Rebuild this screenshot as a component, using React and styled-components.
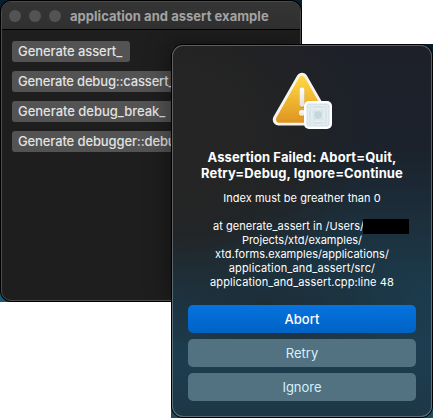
import React from "react";
import styled, { createGlobalStyle } from "styled-components";

const GlobalStyle = createGlobalStyle`
  * { box-sizing: border-box; }
  body { margin: 0; background: #fff; font-family: Inter, "Liberation Sans", sans-serif; -webkit-font-smoothing: antialiased; }
`;

const Desktop = styled.main`
  position: relative;
  width: 433px;
  height: 418px;
  overflow: hidden;
`;

const WindowBackdrop = styled.div`
  width: 302px;
  height: 302px;
  padding: 1px;
  background: linear-gradient(180deg, #06202f 0%, #071a26 60%, #1d5873 98%);
`;

const Window = styled.section`
  position: relative;
  display: flex;
  flex-direction: column;
  width: 300px;
  height: 300px;
  overflow: hidden;
  border: 1px solid #4b4b4b;
  border-radius: 10px;
  background: #1e1e1e;
  box-shadow: 0 0 0 1px #000;

  /* shade that the dialog casts on the window */
  &::after {
    content: "";
    position: absolute;
    left: 169px;
    top: 44px;
    right: 0;
    bottom: 0;
    box-shadow: 0 0 22px 2px rgba(0, 0, 0, 0.4);
  }
`;

const TitleBar = styled.header`
  display: flex;
  flex: none;
  align-items: center;
  height: 28px;
  padding-left: 7px;
  background: linear-gradient(#353535, #303030);
  border-bottom: 1px solid #000;
`;

const TrafficLights = styled.div`
  display: flex;
  gap: 8px;
  margin-right: 9px;
`;

const Light = styled.span`
  width: 12px;
  height: 12px;
  border-radius: 50%;
  background: #535353;
`;

const Title = styled.h1`
  margin: 0;
  font-size: 13px;
  line-height: 16px;
  font-weight: 700;
  letter-spacing: 0.03px;
  white-space: nowrap;
  color: #a3a3a3;
`;

const WindowBody = styled.div`
  display: flex;
  flex-direction: column;
  align-items: flex-start;
  gap: 9px;
  padding: 11px 0 0 10px;
`;

const PushButton = styled.button`
  width: ${(p) => p.$width}px;
  height: 21px;
  padding: 0 0 1px 6px;
  border: 0;
  border-radius: 3px;
  background: #535353;
  color: #e2e2e2;
  font: 500 13px/19px Inter, "Liberation Sans", sans-serif;
  letter-spacing: ${(p) => p.$spacing}px;
  text-align: left;
  white-space: nowrap;
`;

const DialogBackdrop = styled.div`
  position: absolute;
  left: 171px;
  top: 44px;
  width: 262px;
  height: 374px;
  padding: 1px 0 1px 1px;
  overflow: hidden;
  background: linear-gradient(90deg, transparent 0 240px, #071c29 240px) top / 100% 20px no-repeat,
    linear-gradient(#1b4a60, #1b4a60) bottom / 100% 20px no-repeat;
`;

const Dialog = styled.section`
  display: flex;
  flex-direction: column;
  align-items: center;
  width: 260px;
  height: 372px;
  padding: 24px 15px 15px;
  border: 1px solid rgba(255, 255, 255, 0.27);
  border-radius: 11px;
  color: #fff;
  text-align: center;
  background:
    radial-gradient(ellipse 200px 175px at 0% 24%, #252525 0 30%, rgba(35, 35, 35, 0.85) 58%, transparent 100%),
    radial-gradient(ellipse 170px 60px at 36% 70%, rgba(29, 37, 41, 0.65), transparent),
    linear-gradient(180deg, #1d2029 0%, #1b222c 28%, #1c2e3a 46%, #1c3b4d 66%, #1d3e50 82%, #1e3747 100%);
  background-clip: border-box;
  background-origin: border-box;
  box-shadow: 0 0 0 1px #000;
`;

const AlertIcon = styled.svg`
  display: block;
  flex: none;
  width: 64px;
  height: 64px;
`;

const Message = styled.h2`
  margin: 15px 0 0;
  font-size: 13px;
  line-height: 16px;
  font-weight: 700;
`;

const Details = styled.div`
  margin-top: 10px;
  font-size: 11px;
  line-height: 14px;
`;

const Line = styled.div`
  display: flex;
  justify-content: center;
  height: ${(p) => p.$height}px;
  white-space: nowrap;
  letter-spacing: ${(p) => p.$spacing || 0}px;
  margin-right: ${(p) => p.$shift || 0}px;
`;

const Redaction = styled.span`
  flex: none;
  width: 46px;
  height: 15px;
  margin-left: -1px;
  background: #000;
`;

const Actions = styled.div`
  display: flex;
  flex-direction: column;
  gap: 6px;
  width: 228px;
  margin-top: auto;
`;

const ActionButton = styled.button`
  height: 28px;
  padding: 0 0 1px;
  border: 0;
  border-radius: 5px;
  color: ${(p) => (p.$primary ? "#fff" : "#d5f0fb")};
  background: ${(p) => (p.$primary ? "linear-gradient(#0673df, #0062c4)" : "#527181")};
  font: ${(p) => (p.$primary ? 500 : 400)} 13px/16px Inter, "Liberation Sans", sans-serif;
`;

const buttons = [
  { label: "Generate assert_", width: 118, spacing: -0.07 },
  { label: "Generate debug::cassert_", width: 170, spacing: -0.17 },
  { label: "Generate debug_break_", width: 162, spacing: -0.03 },
  { label: "Generate debugger::debug_break_", width: 220, spacing: -0.12 },
];

function WarningIcon() {
  return (
    <AlertIcon viewBox="270 68 64 64" aria-hidden="true">
      <defs>
        <linearGradient id="amber" gradientUnits="userSpaceOnUse" x1="302" y1="74" x2="302" y2="121">
          <stop offset="0" stopColor="#ffda45" />
          <stop offset="1" stopColor="#df9420" />
        </linearGradient>
        <linearGradient id="mark" x1="0" y1="0" x2="0" y2="1">
          <stop offset="0" stopColor="#fff" />
          <stop offset="1" stopColor="#e4e0d8" />
        </linearGradient>
        <clipPath id="tile"><rect x="306.5" y="101.5" width="23" height="23" rx="2" /></clipPath>
      </defs>
      <path d="M302 76.5 L325.5 117.7 L278.5 117.7 Z" fill="#f6f4ef" stroke="#f6f4ef" strokeWidth="11.5" strokeLinejoin="round" />
      <path d="M302 77.5 L324.5 117.2 L279.5 117.2 Z" fill="url(#amber)" stroke="url(#amber)" strokeWidth="7" strokeLinejoin="round" />
      <rect x="299.7" y="86.2" width="4.8" height="19.8" rx="2.4" fill="#a96d14" opacity="0.45" />
      <rect x="299.6" y="85.6" width="4.8" height="19.4" rx="2.4" fill="url(#mark)" />
      <circle cx="301.9" cy="111.8" r="3" fill="#a96d14" opacity="0.45" />
      <circle cx="301.9" cy="111" r="3" fill="url(#mark)" />
      <rect x="304" y="99" width="28" height="28" rx="5" fill="#fff" />
      <g clipPath="url(#tile)">
        <rect x="306" y="101" width="24" height="24" fill="#d3e2e6" />
        <g fill="none" stroke="#edf4f5" strokeWidth="0.6">
          <rect x="308.5" y="103.5" width="19" height="19" />
          <path d="M306 107H330M306 119H330M312 101V125M324 101V125" />
          <circle cx="318" cy="113" r="4.8" />
          <circle cx="318" cy="113" r="7" />
          <ellipse cx="318" cy="105" rx="5" ry="2" />
          <ellipse cx="318" cy="121" rx="5" ry="2" />
          <ellipse cx="310" cy="113" rx="2" ry="5" />
          <ellipse cx="326" cy="113" rx="2" ry="5" />
          <path d="M307 102L312 107M329 102L324 107M307 124L312 119M329 124L324 119" />
        </g>
        <circle cx="318" cy="113" r="3.9" fill="#c3d7dd" />
      </g>
    </AlertIcon>
  );
}

export default function App() {
  return (
    <>
      <GlobalStyle />
      <Desktop>
        <WindowBackdrop>
          <Window>
            <TitleBar>
              <TrafficLights><Light /><Light /><Light /></TrafficLights>
              <Title>application and assert example</Title>
            </TitleBar>
            <WindowBody>
              {buttons.map((b) => (
                <PushButton key={b.label} $width={b.width} $spacing={b.spacing}>{b.label}</PushButton>
              ))}
            </WindowBody>
          </Window>
        </WindowBackdrop>
        <DialogBackdrop>
          <Dialog role="alertdialog">
            <WarningIcon />
            <Message>
              <Line $height={16} $spacing={0.1}>Assertion Failed: Abort=Quit,</Line>
              <Line $height={16} $spacing={0.12}>Retry=Debug, Ignore=Continue</Line>
            </Message>
            <Details>
              <Line $height={28} $spacing={0.04}>Index must be greather than 0</Line>
              <Line $height={14} $spacing={0.04} $shift={-18}>at generate_assert in /Users/<Redaction /></Line>
              <Line $height={14}>Projects/xtd/examples/</Line>
              <Line $height={14} $spacing={0.02}>xtd.forms.examples/applications/</Line>
              <Line $height={14} $spacing={0.15}>application_and_assert/src/</Line>
              <Line $height={14} $spacing={0.12}>application_and_assert.cpp:line 48</Line>
            </Details>
            <Actions>
              <ActionButton $primary>Abort</ActionButton>
              <ActionButton>Retry</ActionButton>
              <ActionButton>Ignore</ActionButton>
            </Actions>
          </Dialog>
        </DialogBackdrop>
      </Desktop>
    </>
  );
}
